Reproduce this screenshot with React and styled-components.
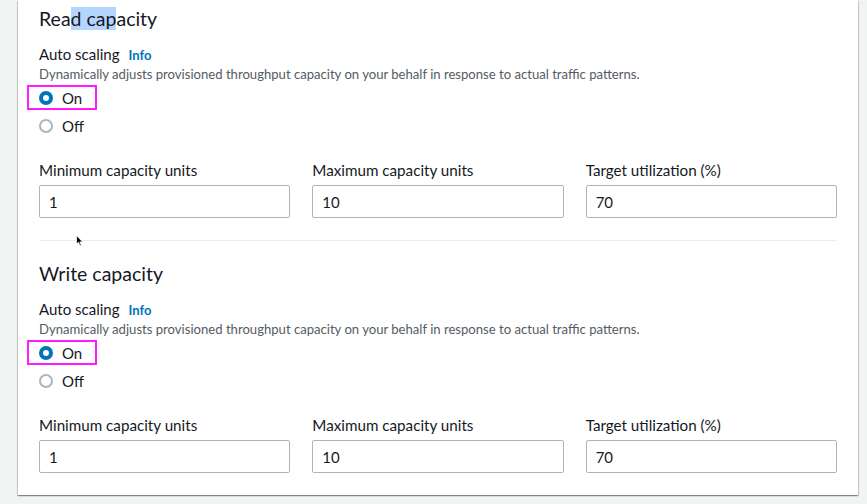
import styled, { createGlobalStyle } from 'styled-components';

const GlobalStyle = createGlobalStyle`
    html, body {
        margin: 0;
        padding: 0;
        background: #f2f3f3;
        font-family: Lato, "Noto Sans", sans-serif;
        color: #16191f;
    }
`;

const Page = styled.div`
    padding: 0 9px 9px 18px;
    position: relative;
`;

const Card = styled.div`
    background: #ffffff;
    padding: 0 21px 22px;
    box-shadow: 0 1px 1px 0 rgba(0, 28, 36, 0.3), 1px 1px 1px 0 rgba(0, 28, 36, 0.15), -1px 1px 1px 0 rgba(0, 28, 36, 0.15);
`;

const Section = styled.section`
    padding-top: 8px;
`;

const Heading = styled.h2`
    margin: 0;
    height: 22px;
    font-size: 19.5px;
    line-height: 22px;
    font-weight: 400;
`;

const Selected = styled.span`
    background: #b4d5fe;
`;

const FieldLabel = styled.div`
    margin-top: 14px;
    height: 20px;
    font-size: 15px;
    line-height: 20px;
    display: flex;
    align-items: baseline;
    gap: 9px;
`;

const InfoLink = styled.a`
    color: #0073bb;
    font-weight: 700;
    font-size: 13px;
    text-decoration: none;
`;

const Description = styled.div`
    margin-top: 2px;
    height: 16px;
    font-size: 13.1px;
    line-height: 16px;
    color: #545b64;
`;

const RadioGroup = styled.div`
    margin-top: 4px;
    display: flex;
    flex-direction: column;
    gap: 4px;
`;

const RadioRow = styled.label`
    position: relative;
    display: flex;
    align-items: center;
    gap: 9px;
    height: 24px;
    font-size: 15px;
    &::after {
        content: '';
        display: ${p => (p.$marked ? 'block' : 'none')};
        position: absolute;
        left: -12px;
        top: -1px;
        width: 70px;
        height: 25px;
        box-sizing: border-box;
        border: 2px solid #ff1aff;
    }
`;

const RadioDot = styled.span`
    width: 14px;
    height: 14px;
    box-sizing: border-box;
    border-radius: 50%;
    background: #fff;
    border: ${p => (p.$checked ? '4px solid #0073bb' : '2px solid #aab7b8')};
`;

const Fields = styled.div`
    margin-top: 22px;
    display: grid;
    grid-template-columns: repeat(3, 1fr);
    column-gap: 22px;
`;

const Field = styled.div`
    display: flex;
    flex-direction: column;
`;

const Label = styled.div`
    height: 20px;
    font-size: 15.2px;
    line-height: 20px;
`;

const Input = styled.input`
    margin-top: 5px;
    height: 33px;
    box-sizing: border-box;
    border: 1px solid #aab7b8;
    border-radius: 2px;
    padding: 0 9px;
    font-family: inherit;
    font-size: 15px;
    color: #16191f;
    outline: none;
`;

const Divider = styled.hr`
    margin: 22px 0 14px;
    border: 0;
    border-top: 1px solid #eaeded;
`;

const Cursor = styled.svg`
    position: absolute;
    left: 76px;
    top: 235px;
`;

const capacityFields = [
    { label: 'Minimum capacity units', value: '1' },
    { label: 'Maximum capacity units', value: '10' },
    { label: 'Target utilization (%)', value: '70' },
];

const CapacitySection = ({ title }) => (
    <Section>
        <Heading>{title}</Heading>
        <FieldLabel>
            Auto scaling <InfoLink href="#">Info</InfoLink>
        </FieldLabel>
        <Description>
            Dynamically adjusts provisioned throughput capacity on your behalf in response to actual traffic patterns.
        </Description>
        <RadioGroup>
            <RadioRow $marked>
                <RadioDot $checked />
                On
            </RadioRow>
            <RadioRow>
                <RadioDot />
                Off
            </RadioRow>
        </RadioGroup>
        <Fields>
            {capacityFields.map(f => (
                <Field key={f.label}>
                    <Label>{f.label}</Label>
                    <Input defaultValue={f.value} />
                </Field>
            ))}
        </Fields>
    </Section>
);

const App = () => {
    return (
        <Page>
            <GlobalStyle />
            <Card>
                <CapacitySection title={<>Rea<Selected>d cap</Selected>acity</>} />
                <Divider />
                <CapacitySection title="Write capacity" />
            </Card>
            <Cursor width="8" height="12" viewBox="0 0 8 12">
                <path d="M0.5 0.5 L0.5 9 L2.5 7.3 L4 11 L5.3 10.4 L3.9 6.9 L6.6 6.9 Z" fill="#000" stroke="#fff" strokeWidth="0.8" />
            </Cursor>
        </Page>
    );
};

export default App;
